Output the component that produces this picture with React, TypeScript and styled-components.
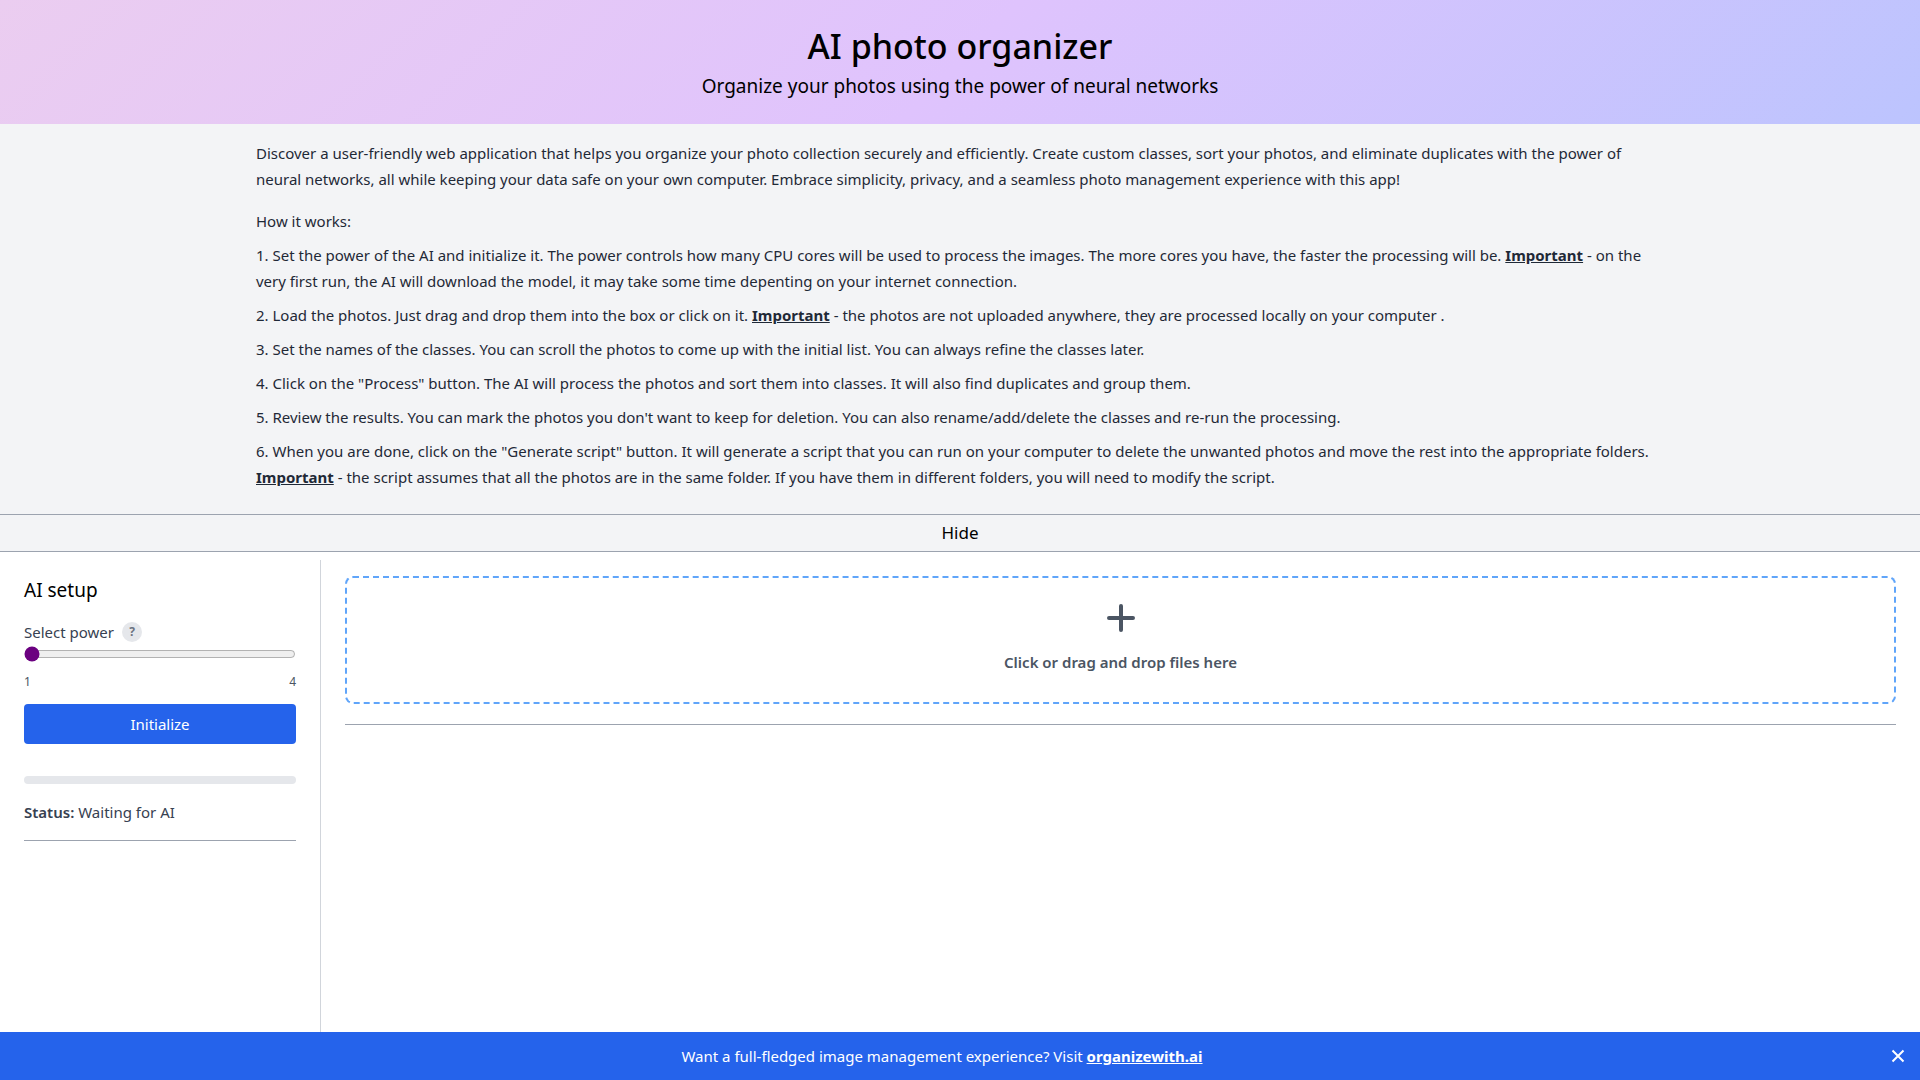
import React, { useState } from "react";
import styled, { createGlobalStyle } from "styled-components";

const GlobalStyle = createGlobalStyle`
  *, *::before, *::after { box-sizing: border-box; }
  body {
    margin: 0;
    background: #fff;
    color: #000;
    font-family: "Noto Sans", "Open Sans", sans-serif;
    font-size: 15px;
    line-height: 24px;
  }
  h1, h2, p, ol { margin: 0; padding: 0; font-weight: 400; }
  button { font: inherit; color: inherit; border: 0; cursor: pointer; }
`;

const Page = styled.div`
  display: flex;
  flex-direction: column;
  min-height: 100vh;
`;

const Header = styled.header`
  display: flex;
  flex-direction: column;
  gap: 4px;
  padding: 24px;
  text-align: center;
  background: linear-gradient(135deg, #ebcdf0, #dfc3fd, #bcc4fe);
`;

const Title = styled.h1`
  && { font-weight: 500; }
  font-size: 34px;
  line-height: 44px;
`;

const Subtitle = styled.p`
  font-size: 19px;
  line-height: 28px;
`;

const Info = styled.section`
  padding: 16px 256px 24px;
  background: #f3f4f6;
  color: #1f2937;
  line-height: 26px;
`;

const Intro = styled.p`
  padding-bottom: 16px;
`;

const Steps = styled.ol`
  display: flex;
  flex-direction: column;
  gap: 8px;
  padding-top: 8px;
  list-style: none;
`;

const Important = styled.strong`
  font-weight: 700;
  text-decoration: underline;
`;

const HideButton = styled.button`
  width: 100%;
  padding: 4px;
  background: #f3f4f6;
  && {
    border-top: 1px solid #9ca3af;
    border-bottom: 1px solid #9ca3af;
    font-size: 17px;
    line-height: 28px;
  }
`;

const Workspace = styled.div`
  flex: 1;
  display: grid;
  grid-template-columns: 1fr 5fr;
  padding-top: 8px;
`;

const Sidebar = styled.aside`
  padding: 16px 24px;
  color: #374151;
`;

const SidebarTitle = styled.h2`
  margin-bottom: 16px;
  color: #000;
  font-size: 19px;
  line-height: 28px;
`;

const FieldHead = styled.div`
  display: flex;
  align-items: center;
  gap: 8px;
  margin-bottom: 2px;
`;

const Help = styled.button`
  width: 20px;
  height: 20px;
  padding: 0;
  border-radius: 50%;
  background: #e5e7eb;
  && {
    color: #6b7280;
    font-size: 12px;
    font-weight: 700;
    line-height: 20px;
  }
`;

const Range = styled.input`
  display: block;
  width: 100%;
  height: 16px;
  margin: 0;
  accent-color: #6b0080;
`;

const Limits = styled.div`
  display: flex;
  justify-content: space-between;
  padding: 10px 0 12px;
  color: #4b5563;
  font-size: 12px;
  line-height: 20px;
`;

const Primary = styled.button`
  width: 100%;
  padding: 8px 16px;
  border-radius: 4px;
  background: #2563eb;
  && { color: #fff; }
`;

const Progress = styled.div`
  height: 8px;
  margin: 32px 0 16px;
  border-radius: 4px;
  background: #e5e7eb;
`;

const Status = styled.p`
  b { font-weight: 600; }
`;

const Rule = styled.hr<{ $gap: number }>`
  margin: ${({ $gap }) => $gap}px 0 0;
  border: 0;
  border-top: 1px solid #9ca3af;
`;

const Main = styled.main`
  padding: 16px 24px;
  border-left: 1px solid #d1d5db;
`;

const DropZone = styled.button`
  display: flex;
  flex-direction: column;
  align-items: center;
  gap: 8px;
  width: 100%;
  padding: 16px 16px 28px;
  border-radius: 8px;
  background: #fff;
  && {
    border: 2px dashed #60a5fa;
    color: #4b5563;
    font-weight: 600;
  }
`;

const Banner = styled.footer`
  position: sticky;
  bottom: 0;
  display: grid;
  grid-template-columns: 1fr 28px;
  align-items: center;
  padding: 12px 8px 12px 0;
  background: #2563eb;
  color: #fff;
  text-align: center;
`;

const BannerLink = styled.a`
  color: #fff;
  font-weight: 700;
`;

const Close = styled.button`
  display: grid;
  place-items: center;
  padding: 0;
  background: none;
`;

export default function App() {
  const [power, setPower] = useState(1);
  return (
    <>
      <GlobalStyle />
      <Page>
        <Header>
          <Title>AI photo organizer</Title>
          <Subtitle>Organize your photos using the power of neural networks</Subtitle>
        </Header>
        <Info>
          <Intro>
            Discover a user-friendly web application that helps you organize your photo collection securely and
            efficiently. Create custom classes, sort your photos, and eliminate duplicates with the power of neural
            networks, all while keeping your data safe on your own computer. Embrace simplicity, privacy, and a
            seamless photo management experience with this app!
          </Intro>
          <p>How it works:</p>
          <Steps>
            <li>
              1. Set the power of the AI and initialize it. The power controls how many CPU cores will be used to
              process the images. The more cores you have, the faster the processing will be.{" "}
              <Important>Important</Important> - on the very first run, the AI will download the model, it may take
              some time depenting on your internet connection.
            </li>
            <li>
              2. Load the photos. Just drag and drop them into the box or click on it. <Important>Important</Important>{" "}
              - the photos are not uploaded anywhere, they are processed locally on your computer .
            </li>
            <li>
              3. Set the names of the classes. You can scroll the photos to come up with the initial list. You can
              always refine the classes later.
            </li>
            <li>
              4. Click on the "Process" button. The AI will process the photos and sort them into classes. It will
              also find duplicates and group them.
            </li>
            <li>
              5. Review the results. You can mark the photos you don't want to keep for deletion. You can also
              rename/add/delete the classes and re-run the processing.
            </li>
            <li>
              6. When you are done, click on the "Generate script" button. It will generate a script that you can run
              on your computer to delete the unwanted photos and move the rest into the appropriate folders.{" "}
              <Important>Important</Important> - the script assumes that all the photos are in the same folder. If you
              have them in different folders, you will need to modify the script.
            </li>
          </Steps>
        </Info>
        <HideButton type="button">Hide</HideButton>
        <Workspace>
          <Sidebar>
            <SidebarTitle>AI setup</SidebarTitle>
            <FieldHead>
              <label htmlFor="power">Select power</label>
              <Help type="button">?</Help>
            </FieldHead>
            <Range
              id="power"
              type="range"
              min={1}
              max={4}
              value={power}
              onChange={(e) => setPower(Number(e.target.value))}
            />
            <Limits>
              <span>1</span>
              <span>4</span>
            </Limits>
            <Primary type="button">Initialize</Primary>
            <Progress />
            <Status>
              <b>Status:</b> Waiting for AI
            </Status>
            <Rule $gap={16} />
          </Sidebar>
          <Main>
            <DropZone type="button">
              <svg width="48" height="48" viewBox="0 0 48 48" fill="none" stroke="currentColor" strokeWidth="4" strokeLinecap="round" aria-hidden="true">
                <path d="M24 12v24M12 24h24" />
              </svg>
              <span>Click or drag and drop files here</span>
            </DropZone>
            <Rule $gap={20} />
          </Main>
        </Workspace>
        <Banner>
          <p>
            Want a full-fledged image management experience? Visit <BannerLink href="#">organizewith.ai</BannerLink>
          </p>
          <Close type="button" aria-label="Close">
            <svg width="20" height="20" viewBox="0 0 20 20" fill="none" stroke="currentColor" strokeWidth="2" aria-hidden="true">
              <path d="M4.500 4.500l11 11M15.500 4.500l-11 11" />
            </svg>
          </Close>
        </Banner>
      </Page>
    </>
  );
}
